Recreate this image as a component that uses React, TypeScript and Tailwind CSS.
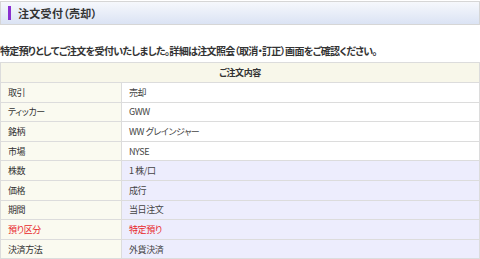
const rows = [
  { label: "取引", value: "売却", tint: false },
  { label: "ティッカー", value: "GWW", tint: false },
  { label: "銘柄", value: "WW グレインジャー", tint: false },
  { label: "市場", value: "NYSE", tint: false },
  { label: "株数", value: "1 株/口", tint: true },
  { label: "価格", value: "成行", tint: true },
  { label: "期間", value: "当日注文", tint: true },
  { label: "預り区分", value: "特定預り", tint: true, red: true },
  { label: "決済方法", value: "外貨決済", tint: true },
];

export default function App() {
  return (
    <div
      className="w-[480px] h-[259px] overflow-hidden bg-white text-[#333]"
      style={{ fontFamily: '"Noto Sans CJK JP", "Noto Sans", sans-serif', fontFeatureSettings: '"palt"' }}
    >
      {/* page title bar */}
      <div className="mt-px h-[24px] flex items-center border border-[#d6d6d6] bg-gradient-to-b from-[#f6f8fc] to-[#dbe3f4]">
        <span className="ml-[7px] w-[3px] h-[14px] bg-[#8a2fd0]" />
        <h1 className="ml-[7px] text-[11px] font-bold leading-none tracking-[0.3px]">注文受付（売却）</h1>
      </div>

      <p className="mt-[21px] text-[10px] font-bold leading-none tracking-[-0.65px]">
        特定預りとしてご注文を受付いたしました。詳細は注文照会（取消・訂正）画面をご確認ください。
      </p>

      <table className="mt-[6px] w-full border-collapse text-[9px] leading-none tracking-[-0.4px]">
        <thead>
          <tr className="h-[20px]">
            <th colSpan={2} className="border border-[#dcdcdc] bg-[#f8f7ea] font-bold text-center">
              ご注文内容
            </th>
          </tr>
        </thead>
        <tbody>
          {rows.map((r) => (
            <tr key={r.label} className="h-[19.6px]">
              <td
                className={`w-[121px] border border-[#dcdcdc] bg-[#fafaf0] pl-[7px] ${r.red ? "text-[#e8282b]" : ""}`}
              >
                {r.label}
              </td>
              <td
                className={`border border-[#dcdcdc] pl-[7px] ${r.tint ? "bg-[#ededfd]" : "bg-white"} ${r.red ? "text-[#e8282b]" : "text-[#444]"}`}
              >
                {r.value}
              </td>
            </tr>
          ))}
        </tbody>
      </table>
    </div>
  );
}
